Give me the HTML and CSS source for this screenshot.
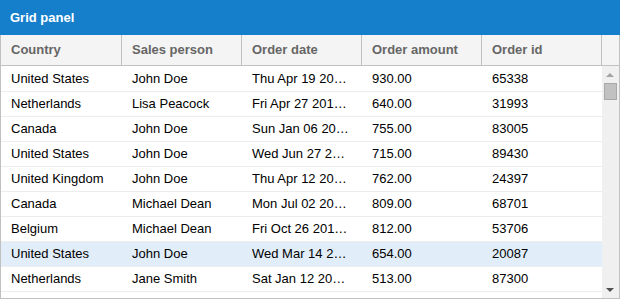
FILE: index.html
```html
<!DOCTYPE html>
<html lang="en">
<head>
    <meta charset="UTF-8">
    <title>Grid panel</title>
    <link rel="stylesheet" href="styles.css">
</head>
<body>
    <div class="panel">
        <div class="panel-title">Grid panel</div>
        <div class="grid-head">
            <div class="hcell">Country</div>
            <div class="hcell">Sales person</div>
            <div class="hcell">Order date</div>
            <div class="hcell">Order amount</div>
            <div class="hcell">Order id</div>
            <div class="hcell filler"></div>
        </div>
        <div class="grid-body">
            <div class="rows">
                <div class="row"><div class="cell">United States</div><div class="cell">John Doe</div><div class="cell">Thu Apr 19 20…</div><div class="cell">930.00</div><div class="cell">65338</div></div>
                <div class="row"><div class="cell">Netherlands</div><div class="cell">Lisa Peacock</div><div class="cell">Fri Apr 27 201…</div><div class="cell">640.00</div><div class="cell">31993</div></div>
                <div class="row"><div class="cell">Canada</div><div class="cell">John Doe</div><div class="cell">Sun Jan 06 20…</div><div class="cell">755.00</div><div class="cell">83005</div></div>
                <div class="row"><div class="cell">United States</div><div class="cell">John Doe</div><div class="cell">Wed Jun 27 20…</div><div class="cell">715.00</div><div class="cell">89430</div></div>
                <div class="row"><div class="cell">United Kingdom</div><div class="cell">John Doe</div><div class="cell">Thu Apr 12 20…</div><div class="cell">762.00</div><div class="cell">24397</div></div>
                <div class="row"><div class="cell">Canada</div><div class="cell">Michael Dean</div><div class="cell">Mon Jul 02 20…</div><div class="cell">809.00</div><div class="cell">68701</div></div>
                <div class="row"><div class="cell">Belgium</div><div class="cell">Michael Dean</div><div class="cell">Fri Oct 26 201…</div><div class="cell">812.00</div><div class="cell">53706</div></div>
                <div class="row selected"><div class="cell">United States</div><div class="cell">John Doe</div><div class="cell">Wed Mar 14 2…</div><div class="cell">654.00</div><div class="cell">20087</div></div>
                <div class="row"><div class="cell">Netherlands</div><div class="cell">Jane Smith</div><div class="cell">Sat Jan 12 20…</div><div class="cell">513.00</div><div class="cell">87300</div></div>
            </div>
            <div class="scrollbar">
                <div class="arrow up"></div>
                <div class="track"><div class="thumb"></div></div>
                <div class="arrow down"></div>
            </div>
        </div>
    </div>
</body>
</html>
```

FILE: styles.css
```css
body { margin: 0; font-family: "Liberation Sans", Arial, sans-serif; font-size: 13px; background: #fff; }

.panel { width: 620px; height: 299px; display: flex; flex-direction: column; box-sizing: border-box; }

/* TITLE */
.panel-title {
    height: 35px;
    flex: none;
    background-color: #157fcc;
    color: #fff;
    font-weight: bold;
    line-height: 35px;
    padding-left: 10px;
}

/* HEADER */
.grid-head {
    height: 31px;
    flex: none;
    display: flex;
    background-color: #f4f4f4;
    border-left: 1px solid #c1c1c1;
    border-right: 1px solid #c1c1c1;
    border-bottom: 1px solid #c1c1c1;
    box-sizing: border-box;
}
.hcell {
    width: 120px;
    box-sizing: border-box;
    border-right: 1px solid #c1c1c1;
    color: #666;
    font-weight: bold;
    line-height: 30px;
    padding-left: 10px;
}
.hcell:first-child { width: 121px; }
.hcell.filler { width: auto; flex: 1; border-right: none; }

/* BODY */
.grid-body {
    flex: 1;
    display: flex;
    overflow: hidden;
    border-left: 1px solid #c1c1c1;
    border-right: 1px solid #c1c1c1;
    border-bottom: 1px solid #c1c1c1;
}
.rows { width: 601px; overflow: hidden; padding-top: 1px; }
.row { display: flex; height: 25px; border-bottom: 1px solid #ededed; box-sizing: border-box; }
.row.selected { background-color: #e1edf8; }
.cell {
    width: 120px;
    box-sizing: border-box;
    padding: 0 10px;
    line-height: 24px;
    color: #000;
    white-space: nowrap;
    overflow: hidden;
    text-overflow: ellipsis;
}
.cell:first-child { width: 121px; }

/* SCROLLBAR */
.scrollbar { flex: 1; background-color: #f0f0f0; display: flex; flex-direction: column; align-items: center; }
.arrow { width: 17px; height: 17px; flex: none; position: relative; }
.arrow::after {
    content: "";
    position: absolute;
    left: 4px;
    width: 0;
    height: 0;
    border-left: 4px solid transparent;
    border-right: 4px solid transparent;
}
.arrow.up::after { top: 7px; border-bottom: 4px solid #a3a3a3; }
.arrow.down::after { top: 7px; border-top: 4px solid #505050; }
.track { flex: 1; width: 100%; display: flex; justify-content: center; }
.thumb { width: 13px; height: 17px; background-color: #c1c1c1; border: 1px solid #a8a8a8; box-sizing: border-box; }
```
